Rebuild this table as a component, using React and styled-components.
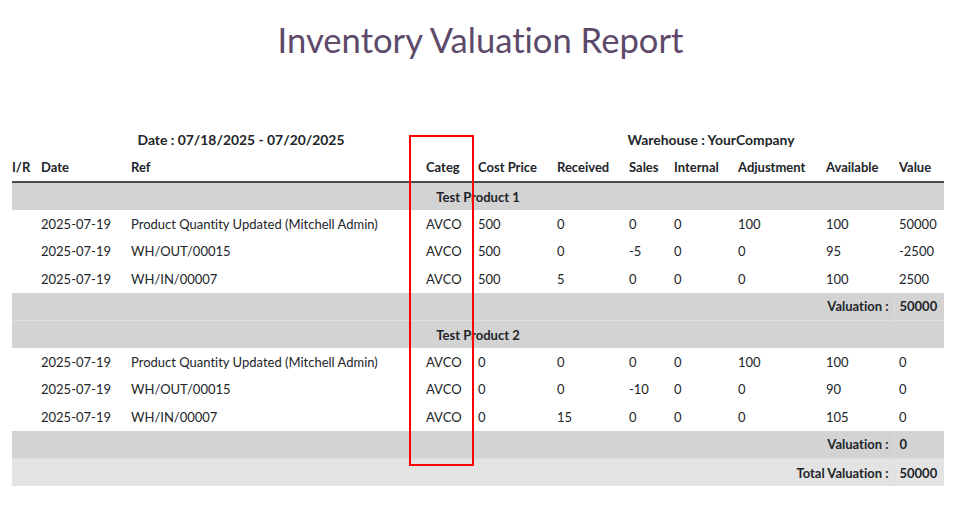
import React from "react";
import styled, { createGlobalStyle } from "styled-components";

const GlobalStyle = createGlobalStyle`
  html, body { margin: 0; padding: 0; background: #fff; }
  body {
    font-family: Lato, "Open Sans", "Liberation Sans", sans-serif;
    color: #212529;
    font-variant-ligatures: none;
  }
`;

const Page = styled.div`
  position: relative;
  width: 961px;
  height: 513px;
  overflow: hidden;
  display: flex;
  flex-direction: column;
  align-items: flex-start;
`;

const Title = styled.h2`
  align-self: stretch;
  margin: 19px 0 64px;
  text-align: center;
  font-weight: 400;
  font-size: 34.6px;
  line-height: 42px;
  color: #5d4a6a;
  font-variant-ligatures: none;
`;

const ReportTable = styled.table`
  margin-left: 12px;
  width: 932px;
  border-collapse: collapse;
  table-layout: fixed;
  font-size: 13px;
`;

const Col = styled.col`
  width: ${(p) => p.$w}px;
`;

const InfoCell = styled.th`
  height: 28px;
  padding: 0 ${(p) => p.$right || 0}px 0 0;
  font-size: 13.9px;
  font-weight: 700;
  text-align: center;
  vertical-align: middle;
  white-space: nowrap;
`;

const HeadRow = styled.tr`
  border-bottom: 2px solid #464a53;
`;

const HeadCell = styled.th`
  height: 28px;
  padding: 0 0 0 ${(p) => p.$pad || 0}px;
  font-weight: 700;
  text-align: left;
  vertical-align: middle;
  white-space: nowrap;
`;

const Row = styled.tr`
  background: ${(p) => p.$bg || "transparent"};
  border-bottom: ${(p) => (p.$line ? "1px solid #dedede" : "none")};
`;

const Cell = styled.td`
  height: 27.4px;
  padding: 0 0 0 ${(p) => p.$pad || 0}px;
  text-align: left;
  vertical-align: middle;
  white-space: nowrap;
`;

const GroupCell = styled.td`
  height: 27.4px;
  padding: 0;
  font-weight: 700;
  text-align: center;
  vertical-align: middle;
`;

const LabelCell = styled.td`
  height: 27.4px;
  padding: 0 5px 0 0;
  font-weight: 700;
  text-align: right;
  vertical-align: middle;
  border-right: 1px solid #dcdcdc;
`;

const AmountCell = styled.td`
  height: 27.4px;
  padding: 0 0 0 5px;
  font-weight: 700;
  text-align: left;
  vertical-align: middle;
`;

const Highlight = styled.div`
  position: absolute;
  left: 409px;
  top: 135px;
  width: 61px;
  height: 327px;
  border: 2.5px solid #ff0000;
  pointer-events: none;
`;

const widths = [29, 90, 295, 52, 79, 72, 45, 64, 88, 68, 50];
const headers = ["I/R", "Date", "Ref", "Categ", "Cost Price", "Received", "Sales", "Internal", "Adjustment", "Available", "Value"];

const groups = [
  {
    name: "Test Product 1",
    valuation: "50000",
    lines: [
      ["", "2025-07-19", "Product Quantity Updated (Mitchell Admin)", "AVCO", "500", "0", "0", "0", "100", "100", "50000"],
      ["", "2025-07-19", "WH/OUT/00015", "AVCO", "500", "0", "-5", "0", "0", "95", "-2500"],
      ["", "2025-07-19", "WH/IN/00007", "AVCO", "500", "5", "0", "0", "0", "100", "2500"],
    ],
  },
  {
    name: "Test Product 2",
    valuation: "0",
    lines: [
      ["", "2025-07-19", "Product Quantity Updated (Mitchell Admin)", "AVCO", "0", "0", "0", "0", "100", "100", "0"],
      ["", "2025-07-19", "WH/OUT/00015", "AVCO", "0", "0", "-10", "0", "0", "90", "0"],
      ["", "2025-07-19", "WH/IN/00007", "AVCO", "0", "15", "0", "0", "0", "105", "0"],
    ],
  },
];

export default function App() {
  return (
    <>
      <GlobalStyle />
      <Page>
        <Title>Inventory Valuation Report</Title>
        <ReportTable>
          <colgroup>
            {widths.map((w, i) => (
              <Col key={i} $w={w} />
            ))}
          </colgroup>
          <thead>
            <tr>
              <InfoCell colSpan={4} $right={8}>Date : 07/18/2025 - 07/20/2025</InfoCell>
              <InfoCell colSpan={7}>Warehouse : YourCompany</InfoCell>
            </tr>
            <HeadRow>
              {headers.map((h, i) => (
                <HeadCell key={h} $pad={i === 10 ? 5 : 0}>
                  {h}
                </HeadCell>
              ))}
            </HeadRow>
          </thead>
          <tbody>
            {groups.map((g) => (
              <React.Fragment key={g.name}>
                <Row $bg="#d3d3d3">
                  <GroupCell colSpan={11}>{g.name}</GroupCell>
                </Row>
                {g.lines.map((line, li) => (
                  <Row key={li}>
                    {line.map((v, ci) => (
                      <Cell key={ci} $pad={ci === 10 ? 5 : 0}>
                        {v}
                      </Cell>
                    ))}
                  </Row>
                ))}
                <Row $bg="#d3d3d3" $line>
                  <LabelCell colSpan={10}>Valuation :</LabelCell>
                  <AmountCell>{g.valuation}</AmountCell>
                </Row>
              </React.Fragment>
            ))}
            <Row $bg="#e3e3e3">
              <LabelCell colSpan={10}>Total Valuation :</LabelCell>
              <AmountCell>50000</AmountCell>
            </Row>
          </tbody>
        </ReportTable>
        <Highlight />
      </Page>
    </>
  );
}
